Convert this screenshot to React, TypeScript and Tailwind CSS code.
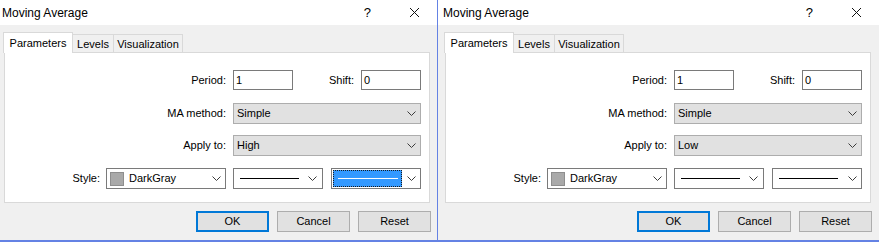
import React from 'react';

const Chevron: React.FC = () => (
  <svg width="9" height="5" viewBox="0 0 9 5" className="shrink-0">
    <polyline points="0.5,0.5 4.5,4.5 8.5,0.5" fill="none" stroke="#3c3c3c" strokeWidth="1" />
  </svg>
);

type DialogProps = { applyTo: string; focused: boolean; offset: boolean };

const Dialog: React.FC<DialogProps> = ({ applyTo, focused, offset }) => {
  return (
    <div
      className={`flex flex-col h-[242px] border-b-2 border-[#6482e4] ${
        offset ? 'w-[441px]' : 'w-[438px] border-r border-r-[#6482e4]'
      }`}
    >
      {/* Title bar */}
      <div className={`h-[25px] bg-white flex items-center text-[12px] text-black ${offset ? 'pl-[5px]' : 'pl-[2px]'}`}>
        <span>Moving Average</span>
        <span className="ml-auto text-[13px]">?</span>
        <svg width="9" height="9" viewBox="0 0 9 9" className="ml-[39px] mr-[18px]">
          <path d="M0 0 L9 9 M9 0 L0 9" stroke="#111" strokeWidth="1" />
        </svg>
      </div>

      {/* Body */}
      <div className={`flex-1 bg-[#f0f0f0] flex flex-col ${offset ? 'pl-[3px]' : ''}`}>
        {/* Tabs */}
        <div className="flex items-end mt-[7px] ml-[3px] text-[11px]">
          <div className="relative z-10 w-[70px] h-[21px] -mb-px bg-white border-l border-t border-r border-[#d9d9d9] flex items-center justify-center">
            Parameters
          </div>
          <div className="w-[41px] h-[18px] border-t border-r border-[#d9d9d9] flex items-center justify-center pt-[1px]">
            Levels
          </div>
          <div className="w-[69px] h-[18px] border-t border-r border-[#d9d9d9] flex items-center justify-center pt-[1px]">
            Visualization
          </div>
        </div>

        {/* Panel */}
        <div className="ml-[4px] w-[426px] h-[151px] bg-white border border-[#d9d9d9] text-[11px] text-black">
          <div className="flex items-center h-[20px] mt-[17px]">
            <div className="w-[221px] text-right">Period:</div>
            <div className="ml-[7px] w-[60px] h-[20px] bg-white border border-[#7a7a7a] flex items-center pl-[2px]">1</div>
            <div className="w-[61px] text-right">Shift:</div>
            <div className="ml-[7px] w-[60px] h-[20px] bg-white border border-[#7a7a7a] flex items-center pl-[2px]">0</div>
          </div>

          <div className="flex items-center h-[21px] mt-[13px]">
            <div className="w-[221px] text-right">MA method:</div>
            <div className="ml-[7px] w-[188px] h-[21px] bg-[#e1e1e1] border border-[#adadad] flex items-center pl-[3px] pr-[4px]">
              <span>Simple</span>
              <span className="ml-auto flex"><Chevron /></span>
            </div>
          </div>

          <div className="flex items-center h-[21px] mt-[11px]">
            <div className="w-[221px] text-right">Apply to:</div>
            <div className="ml-[7px] w-[188px] h-[21px] bg-[#e1e1e1] border border-[#adadad] flex items-center pl-[3px] pr-[4px]">
              <span>{applyTo}</span>
              <span className="ml-auto flex"><Chevron /></span>
            </div>
          </div>

          <div className="flex items-center h-[21px] mt-[12px]">
            <div className="w-[95px] text-right">Style:</div>
            <div className="ml-[6px] w-[120px] h-[21px] bg-white border border-[#7a7a7a] flex items-center pl-[3px] pr-[4px]">
              <span className="w-[14px] h-[14px] bg-[#a9a9a9] border border-[#8e8e8e]" />
              <span className="ml-[5px]">DarkGray</span>
              <span className="ml-auto flex"><Chevron /></span>
            </div>
            <div className="ml-[7px] w-[90px] h-[21px] bg-white border border-[#7a7a7a] flex items-center pl-[6px] pr-[5px]">
              <span className="w-[59px] h-px bg-black" />
              <span className="ml-auto flex"><Chevron /></span>
            </div>
            <div className="ml-[8px] w-[90px] h-[21px] bg-white border border-[#7a7a7a] flex items-center pl-px pr-[4px]">
              {focused ? (
                <span className="w-[69px] h-[17px] bg-[#3399ff] border border-dotted border-[#1a1a1a] flex items-center pl-[4px]">
                  <span className="w-[60px] h-px bg-white" />
                </span>
              ) : (
                <span className="ml-[5px] w-[59px] h-px bg-black" />
              )}
              <span className="ml-auto flex"><Chevron /></span>
            </div>
          </div>
        </div>

        {/* Buttons */}
        <div className="flex mt-[8px] ml-[196px] text-[11px] text-black">
          <button className="w-[73px] h-[21px] bg-[#e1e1e1] border-2 border-[#0078d7] flex items-center justify-center">OK</button>
          <button className="ml-[8px] w-[73px] h-[21px] bg-[#e1e1e1] border border-[#adadad] flex items-center justify-center">Cancel</button>
          <button className="ml-[8px] w-[73px] h-[21px] bg-[#e1e1e1] border border-[#adadad] flex items-center justify-center">Reset</button>
        </div>
      </div>
    </div>
  );
};

const App: React.FC = () => {
  return (
    <div className="flex w-[879px] h-[242px] overflow-hidden font-['Liberation_Sans',Arial,sans-serif] bg-white">
      <Dialog applyTo="High" focused={true} offset={false} />
      <Dialog applyTo="Low" focused={false} offset={true} />
    </div>
  );
};

export default App;
